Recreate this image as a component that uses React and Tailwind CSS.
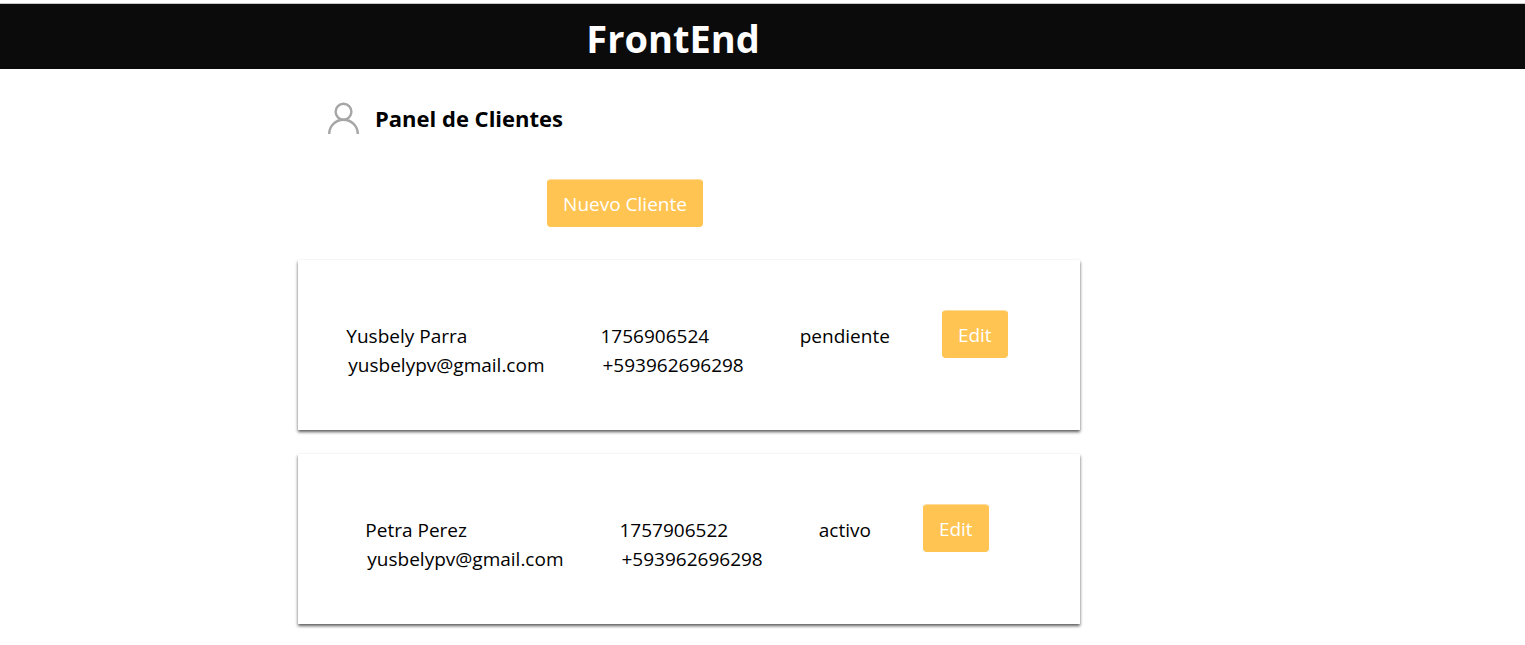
const clients = [
  {
    name: 'Yusbely Parra',
    email: 'yusbelypv@gmail.com',
    document: '1756906524',
    phone: '+593962696298',
    status: 'pendiente',
  },
  {
    name: 'Petra Perez',
    email: 'yusbelypv@gmail.com',
    document: '1757906522',
    phone: '+593962696298',
    status: 'activo',
  },
];

function Button({ children }) {
  return (
    <button type="button" className="h-12 cursor-pointer rounded border border-t-[#ffdc9c] border-[#ffc451] bg-[#ffc451] px-[15px] pt-0.5 text-[19px] leading-7 text-white">
      {children}
    </button>
  );
}

function UserIcon() {
  return (
    <svg viewBox="0 0 32 32" className="size-8 shrink-0" fill="none" stroke="#a6a6a6" strokeWidth="2.4" aria-hidden="true">
      <circle cx="15.500" cy="9.700" r="7.900" />
      <path d="M1.200 32C1.200 24 7.600 17.700 15.500 17.700S29.800 24 29.800 32" />
    </svg>
  );
}

function ClientCard({ client }) {
  return (
    <li className="flex justify-center bg-white pt-[50px] pr-6 pb-[50px] shadow-[0_2px_3px_rgba(0,0,0,0.65)]">
      <div className="flex items-start gap-14">
        <div className="pt-3">
          <p>{client.name}</p>
          <p className="pl-0.5">{client.email}</p>
        </div>
        <div className="pt-3">
          <p>{client.document}</p>
          <p className="pl-0.5">{client.phone}</p>
        </div>
        <div className="flex items-start gap-[52px]">
          <p className="pt-3">{client.status}</p>
          <Button>Edit</Button>
        </div>
      </div>
    </li>
  );
}

export default function App() {
  return (
    <div className="bg-white font-['Open_Sans','Noto_Sans',sans-serif] text-[19px] leading-[29px] text-black">
      <header className="mt-[3px] border-t border-[#c8c8c8] bg-[#0b0b0b] pt-[9px] pb-1.5 pl-[298px]">
        <h1 className="max-w-[750px] text-center text-[38px] leading-[50px] font-bold text-white">FrontEnd</h1>
      </header>
      <main className="ml-[298px] max-w-[782px] pb-5">
        <div className="flex items-center gap-[15px] pt-[31px] pl-[30px]">
          <UserIcon />
          <h2 className="text-[22px] leading-9 font-bold">Panel de Clientes</h2>
        </div>
        <div className="flex max-w-[654px] justify-center pt-[43px]">
          <Button>Nuevo Cliente</Button>
        </div>
        <ul className="mt-[33px] flex flex-col gap-6">
          {clients.map((client) => (
            <ClientCard key={client.document} client={client} />
          ))}
        </ul>
      </main>
    </div>
  );
}
